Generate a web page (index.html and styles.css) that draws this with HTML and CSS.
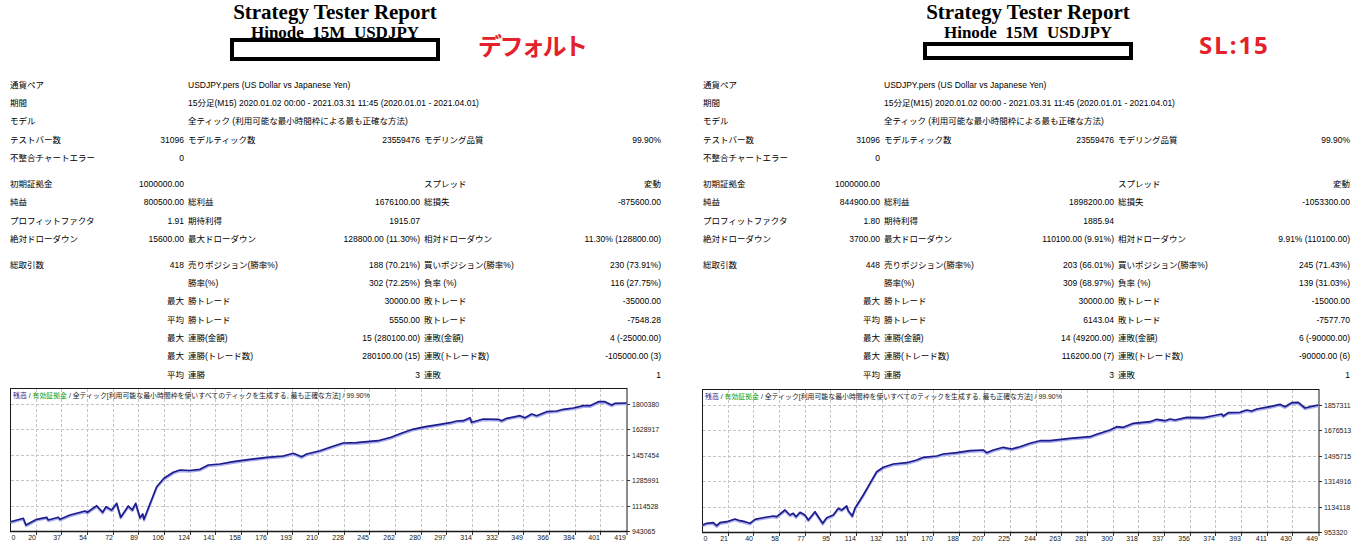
FILE: index.html
```html
<!DOCTYPE html>
<html lang="ja">
<head>
<meta charset="utf-8">
<title>Strategy Tester Report</title>
<link rel="stylesheet" href="styles.css">
</head>
<body>
<div class="page">

  <section class="panel">
    <div class="header">
      <div class="titlebox">
        <div class="title">Strategy Tester Report</div>
        <div class="subtitle">Hinode&nbsp; 15M&nbsp; USDJPY</div>
        <div class="redact"></div>
      </div>
      <div class="tag">デフォルト</div>
    </div>

    <div class="table">
      <div class="group">
        <span class="k0">通貨ペア</span><span></span><span class="k span">USDJPY.pers (US Dollar vs Japanese Yen)</span>
        <span class="k0">期間</span><span></span><span class="k span">15分足(M15) 2020.01.02 00:00 - 2021.03.31 11:45 (2020.01.01 - 2021.04.01)</span>
        <span class="k0">モデル</span><span></span><span class="k span">全ティック (利用可能な最小時間枠による最も正確な方法)</span>
        <span class="k0">テストバー数</span><span class="v">31096</span><span class="k">モデルティック数</span><span class="v">23559476</span><span class="k">モデリング品質</span><span class="v">99.90%</span>
        <span class="k0">不整合チャートエラー</span><span class="v">0</span><span></span><span></span><span></span><span></span>
      </div>
      <div class="group">
        <span class="k0">初期証拠金</span><span class="v">1000000.00</span><span></span><span></span><span class="k">スプレッド</span><span class="v">変動</span>
        <span class="k0">純益</span><span class="v">800500.00</span><span class="k">総利益</span><span class="v">1676100.00</span><span class="k">総損失</span><span class="v">-875600.00</span>
        <span class="k0">プロフィットファクタ</span><span class="v">1.91</span><span class="k">期待利得</span><span class="v">1915.07</span><span></span><span></span>
        <span class="k0">絶対ドローダウン</span><span class="v">15600.00</span><span class="k">最大ドローダウン</span><span class="v">128800.00 (11.30%)</span><span class="k">相対ドローダウン</span><span class="v">11.30% (128800.00)</span>
      </div>
      <div class="group">
        <span class="k0">総取引数</span><span class="v">418</span><span class="k">売りポジション(勝率%)</span><span class="v">188 (70.21%)</span><span class="k">買いポジション(勝率%)</span><span class="v">230 (73.91%)</span>
        <span class="k0"></span><span class="v"></span><span class="k">勝率(%)</span><span class="v">302 (72.25%)</span><span class="k">負率 (%)</span><span class="v">116 (27.75%)</span>
        <span class="k0"></span><span class="v">最大</span><span class="k">勝トレード</span><span class="v">30000.00</span><span class="k">敗トレード</span><span class="v">-35000.00</span>
        <span class="k0"></span><span class="v">平均</span><span class="k">勝トレード</span><span class="v">5550.00</span><span class="k">敗トレード</span><span class="v">-7548.28</span>
        <span class="k0"></span><span class="v">最大</span><span class="k">連勝(金額)</span><span class="v">15 (280100.00)</span><span class="k">連敗(金額)</span><span class="v">4 (-25000.00)</span>
        <span class="k0"></span><span class="v">最大</span><span class="k">連勝(トレード数)</span><span class="v">280100.00 (15)</span><span class="k">連敗(トレード数)</span><span class="v">-105000.00 (3)</span>
        <span class="k0"></span><span class="v">平均</span><span class="k">連勝</span><span class="v">3</span><span class="k">連敗</span><span class="v">1</span>
      </div>
    </div>

    <svg class="chart" viewBox="0 0 680 160" width="680" height="160">
      <defs>
        <g id="grid">
          <g class="gl">
            <line x1="26.5" y1="3" x2="26.5" y2="145"/><line x1="51.5" y1="3" x2="51.5" y2="145"/><line x1="77.5" y1="3" x2="77.5" y2="145"/><line x1="103.5" y1="3" x2="103.5" y2="145"/><line x1="128.5" y1="3" x2="128.5" y2="145"/><line x1="154.5" y1="3" x2="154.5" y2="145"/><line x1="180.5" y1="3" x2="180.5" y2="145"/><line x1="205.5" y1="3" x2="205.5" y2="145"/><line x1="231.5" y1="3" x2="231.5" y2="145"/><line x1="257.5" y1="3" x2="257.5" y2="145"/><line x1="282.5" y1="3" x2="282.5" y2="145"/><line x1="308.5" y1="3" x2="308.5" y2="145"/><line x1="334.5" y1="3" x2="334.5" y2="145"/><line x1="359.5" y1="3" x2="359.5" y2="145"/><line x1="385.5" y1="3" x2="385.5" y2="145"/><line x1="411.5" y1="3" x2="411.5" y2="145"/><line x1="436.5" y1="3" x2="436.5" y2="145"/><line x1="462.5" y1="3" x2="462.5" y2="145"/><line x1="488.5" y1="3" x2="488.5" y2="145"/><line x1="513.5" y1="3" x2="513.5" y2="145"/><line x1="539.5" y1="3" x2="539.5" y2="145"/><line x1="565.5" y1="3" x2="565.5" y2="145"/><line x1="590.5" y1="3" x2="590.5" y2="145"/>
            <line x1="1" y1="18.5" x2="616.5" y2="18.5"/><line x1="1" y1="43.5" x2="616.5" y2="43.5"/><line x1="1" y1="69.5" x2="616.5" y2="69.5"/><line x1="1" y1="94.5" x2="616.5" y2="94.5"/><line x1="1" y1="120.5" x2="616.5" y2="120.5"/>
          </g>
          <rect class="frame" x="0.5" y="2.5" width="616.5" height="143"/>
          <line class="axis" x1="0" y1="145.5" x2="617.5" y2="145.5"/>
          <path class="ticks" d="M617 18.5h3M617 43.5h3M617 69.5h3M617 94.5h3M617 120.5h3M617 145.5h3M26.5 146v3M51.5 146v3M77.5 146v3M103.5 146v3M128.5 146v3M154.5 146v3M180.5 146v3M205.5 146v3M231.5 146v3M257.5 146v3M282.5 146v3M308.5 146v3M334.5 146v3M359.5 146v3M385.5 146v3M411.5 146v3M436.5 146v3M462.5 146v3M488.5 146v3M513.5 146v3M539.5 146v3M565.5 146v3M590.5 146v3M617 146v3"/>
        </g>
      </defs>
      <use href="#grid"/>
      <text class="legend" x="3" y="11.5"><tspan class="lg-bal">残高</tspan> / <tspan class="lg-eq">有効証拠金</tspan> / 全ティック[利用可能な最小時間枠を使いすべてのティックを生成する, 最も正確な方法] / 99.90%</text>
      <polyline class="eq-shadow" points="0.7,135.7 13.3,132.3 16,139 26.7,133.3 36.7,131.3 38.3,134 48.3,131.3 50,133.3 60,129 75,125 77.3,126.3 86.7,119.7 92.7,126.3 96,120.7 101.7,124 106.7,117.3 110.7,131.3 118.3,120 122.3,124 125.7,117.3 130,131.7 132.7,128 134,133.3 138.3,122.3 146.7,100.7 154,92.3 163.3,86.3 170,84 180,84.5 190,83.3 198.3,79 210,78 223.3,75.7 240,73.3 256.7,71.3 273.3,70 283.3,67.3 291.7,70.7 296.7,68 310,64.7 320,61.3 333,57 346.3,56.7 368,54.7 381,51.3 392,47 402.6,43.3 415.6,40.7 430,38.3 440,36.7 446.7,35 453.3,34.7 460,31.7 461.7,36.3 473.3,33 488.3,33.3 491.7,34.7 496.7,32.3 510,29.7 515,31.7 521.7,28 526.7,29.7 536.7,25.7 546.7,25 553.3,23.3 563.3,22 573.3,19.7 580,19.7 588.3,15.7 595,15.7 601.7,19 605,17.3 616.7,17"/>
      <polyline class="eq" points="0.7,135.7 13.3,132.3 16,139 26.7,133.3 36.7,131.3 38.3,134 48.3,131.3 50,133.3 60,129 75,125 77.3,126.3 86.7,119.7 92.7,126.3 96,120.7 101.7,124 106.7,117.3 110.7,131.3 118.3,120 122.3,124 125.7,117.3 130,131.7 132.7,128 134,133.3 138.3,122.3 146.7,100.7 154,92.3 163.3,86.3 170,84 180,84.5 190,83.3 198.3,79 210,78 223.3,75.7 240,73.3 256.7,71.3 273.3,70 283.3,67.3 291.7,70.7 296.7,68 310,64.7 320,61.3 333,57 346.3,56.7 368,54.7 381,51.3 392,47 402.6,43.3 415.6,40.7 430,38.3 440,36.7 446.7,35 453.3,34.7 460,31.7 461.7,36.3 473.3,33 488.3,33.3 491.7,34.7 496.7,32.3 510,29.7 515,31.7 521.7,28 526.7,29.7 536.7,25.7 546.7,25 553.3,23.3 563.3,22 573.3,19.7 580,19.7 588.3,15.7 595,15.7 601.7,19 605,17.3 616.7,17"/>
      <g class="ylab">
        <text x="622" y="21">1800380</text><text x="622" y="46">1628917</text><text x="622" y="72">1457454</text><text x="622" y="97">1285991</text><text x="622" y="123">1114528</text><text x="622" y="148">943065</text>
      </g>
      <g class="xlab">
        <text class="x0" x="1.5" y="154.2">0</text>
        <text x="26" y="154.2">20</text><text x="51" y="154.2">37</text><text x="77" y="154.2">54</text><text x="103" y="154.2">72</text><text x="128" y="154.2">89</text><text x="154" y="154.2">106</text><text x="180" y="154.2">124</text><text x="205" y="154.2">141</text><text x="231" y="154.2">158</text><text x="257" y="154.2">176</text><text x="282" y="154.2">193</text><text x="308" y="154.2">210</text><text x="334" y="154.2">228</text><text x="359" y="154.2">245</text><text x="385" y="154.2">262</text><text x="411" y="154.2">280</text><text x="436" y="154.2">297</text><text x="462" y="154.2">314</text><text x="488" y="154.2">332</text><text x="513" y="154.2">349</text><text x="539" y="154.2">366</text><text x="565" y="154.2">384</text><text x="590" y="154.2">401</text><text x="616" y="154.2">419</text>
      </g>
    </svg>
  </section>

  <section class="panel panel--sl">
    <div class="header">
      <div class="titlebox">
        <div class="title">Strategy Tester Report</div>
        <div class="subtitle">Hinode&nbsp; 15M&nbsp; USDJPY</div>
        <div class="redact"></div>
      </div>
      <div class="tag">SL:15</div>
    </div>

    <div class="table">
      <div class="group">
        <span class="k0">通貨ペア</span><span></span><span class="k span">USDJPY.pers (US Dollar vs Japanese Yen)</span>
        <span class="k0">期間</span><span></span><span class="k span">15分足(M15) 2020.01.02 00:00 - 2021.03.31 11:45 (2020.01.01 - 2021.04.01)</span>
        <span class="k0">モデル</span><span></span><span class="k span">全ティック (利用可能な最小時間枠による最も正確な方法)</span>
        <span class="k0">テストバー数</span><span class="v">31096</span><span class="k">モデルティック数</span><span class="v">23559476</span><span class="k">モデリング品質</span><span class="v">99.90%</span>
        <span class="k0">不整合チャートエラー</span><span class="v">0</span><span></span><span></span><span></span><span></span>
      </div>
      <div class="group">
        <span class="k0">初期証拠金</span><span class="v">1000000.00</span><span></span><span></span><span class="k">スプレッド</span><span class="v">変動</span>
        <span class="k0">純益</span><span class="v">844900.00</span><span class="k">総利益</span><span class="v">1898200.00</span><span class="k">総損失</span><span class="v">-1053300.00</span>
        <span class="k0">プロフィットファクタ</span><span class="v">1.80</span><span class="k">期待利得</span><span class="v">1885.94</span><span></span><span></span>
        <span class="k0">絶対ドローダウン</span><span class="v">3700.00</span><span class="k">最大ドローダウン</span><span class="v">110100.00 (9.91%)</span><span class="k">相対ドローダウン</span><span class="v">9.91% (110100.00)</span>
      </div>
      <div class="group">
        <span class="k0">総取引数</span><span class="v">448</span><span class="k">売りポジション(勝率%)</span><span class="v">203 (66.01%)</span><span class="k">買いポジション(勝率%)</span><span class="v">245 (71.43%)</span>
        <span class="k0"></span><span class="v"></span><span class="k">勝率(%)</span><span class="v">309 (68.97%)</span><span class="k">負率 (%)</span><span class="v">139 (31.03%)</span>
        <span class="k0"></span><span class="v">最大</span><span class="k">勝トレード</span><span class="v">30000.00</span><span class="k">敗トレード</span><span class="v">-15000.00</span>
        <span class="k0"></span><span class="v">平均</span><span class="k">勝トレード</span><span class="v">6143.04</span><span class="k">敗トレード</span><span class="v">-7577.70</span>
        <span class="k0"></span><span class="v">最大</span><span class="k">連勝(金額)</span><span class="v">14 (49200.00)</span><span class="k">連敗(金額)</span><span class="v">6 (-90000.00)</span>
        <span class="k0"></span><span class="v">最大</span><span class="k">連勝(トレード数)</span><span class="v">116200.00 (7)</span><span class="k">連敗(トレード数)</span><span class="v">-90000.00 (6)</span>
        <span class="k0"></span><span class="v">平均</span><span class="k">連勝</span><span class="v">3</span><span class="k">連敗</span><span class="v">1</span>
      </div>
    </div>

    <svg class="chart" viewBox="0 0 680 160" width="680" height="160">
      <use href="#grid"/>
      <text class="legend" x="3" y="11.5"><tspan class="lg-bal">残高</tspan> / <tspan class="lg-eq">有効証拠金</tspan> / 全ティック[利用可能な最小時間枠を使いすべてのティックを生成する, 最も正確な方法] / 99.90%</text>
      <polyline class="eq-shadow" points="0.7,138 4.7,136.3 11.3,135.7 14.7,138.7 18,135.7 24.7,134.7 33,132 38,133.7 43,134.7 48,136.3 53,132.3 62,130.5 71.3,129 74.7,129.7 83,123 88,128 91.3,126.3 94,129.7 98,125.3 103,128 106.3,133 113,124.7 120.7,136.3 124.7,130.7 131.3,128 136.3,121.3 139.7,123 144.7,119 146.3,123.7 150.3,129 153,121.3 161.3,108 168,96.3 174.7,84.7 181.3,80.3 191.3,77 204.7,75.7 214.7,73 221.3,70.3 234.7,69 241.3,67 254.7,65.7 268,63.7 281.3,63 284.7,65.7 291.3,63 301.3,60.3 309.7,62 318,59.7 328,56.3 338,53.7 348,53.7 368,51.3 388,49.7 394.7,47.3 408,43 414.7,39.7 421.3,40.3 431.3,36.3 448,34.7 454.7,32.3 463,33.7 468,32 473,33 484.7,30.3 501.3,30.7 509.7,29 519.7,27 521.3,29 526.3,25.7 538,25.3 544.7,23 549.7,24 554.7,22 568,19.7 578,17.3 583,19.7 589.7,15.7 596.3,15.3 603,21 608,19.7 616.3,18"/>
      <polyline class="eq" points="0.7,138 4.7,136.3 11.3,135.7 14.7,138.7 18,135.7 24.7,134.7 33,132 38,133.7 43,134.7 48,136.3 53,132.3 62,130.5 71.3,129 74.7,129.7 83,123 88,128 91.3,126.3 94,129.7 98,125.3 103,128 106.3,133 113,124.7 120.7,136.3 124.7,130.7 131.3,128 136.3,121.3 139.7,123 144.7,119 146.3,123.7 150.3,129 153,121.3 161.3,108 168,96.3 174.7,84.7 181.3,80.3 191.3,77 204.7,75.7 214.7,73 221.3,70.3 234.7,69 241.3,67 254.7,65.7 268,63.7 281.3,63 284.7,65.7 291.3,63 301.3,60.3 309.7,62 318,59.7 328,56.3 338,53.7 348,53.7 368,51.3 388,49.7 394.7,47.3 408,43 414.7,39.7 421.3,40.3 431.3,36.3 448,34.7 454.7,32.3 463,33.7 468,32 473,33 484.7,30.3 501.3,30.7 509.7,29 519.7,27 521.3,29 526.3,25.7 538,25.3 544.7,23 549.7,24 554.7,22 568,19.7 578,17.3 583,19.7 589.7,15.7 596.3,15.3 603,21 608,19.7 616.3,18"/>
      <g class="ylab">
        <text x="622" y="21">1857311</text><text x="622" y="46">1676513</text><text x="622" y="72">1495715</text><text x="622" y="97">1314916</text><text x="622" y="123">1134118</text><text x="622" y="148">953320</text>
      </g>
      <g class="xlab">
        <text class="x0" x="1.5" y="154.2">0</text>
        <text x="26" y="154.2">21</text><text x="51" y="154.2">40</text><text x="77" y="154.2">58</text><text x="103" y="154.2">77</text><text x="128" y="154.2">95</text><text x="154" y="154.2">114</text><text x="180" y="154.2">132</text><text x="205" y="154.2">151</text><text x="231" y="154.2">170</text><text x="257" y="154.2">188</text><text x="282" y="154.2">207</text><text x="308" y="154.2">225</text><text x="334" y="154.2">244</text><text x="359" y="154.2">263</text><text x="385" y="154.2">281</text><text x="411" y="154.2">300</text><text x="436" y="154.2">318</text><text x="462" y="154.2">337</text><text x="488" y="154.2">356</text><text x="513" y="154.2">374</text><text x="539" y="154.2">393</text><text x="565" y="154.2">411</text><text x="590" y="154.2">430</text><text x="616" y="154.2">449</text>
      </g>
    </svg>
  </section>

</div>
</body>
</html>
```

FILE: styles.css
```css
* { box-sizing: border-box; }

html, body {
  margin: 0;
  padding: 0;
  background: #ffffff;
}

body {
  width: 1369px;
  height: 560px;
  overflow: hidden;
  color: #000000;
  font-family: "Liberation Sans", "Noto Sans CJK JP", sans-serif;
}

.page {
  display: flex;
  align-items: flex-start;
}

.panel {
  width: 693px;
  padding-left: 10px;
  --cols: 120px 54px 136px 100px 138px 103px;
}

.panel--sl {
  width: 676px;
  --cols: 120px 57px 134px 100px 131px 105px;
}

/* ---------- header ---------- */
.header {
  height: 66px;
  display: flex;
  align-items: flex-start;
  padding-left: 220px;
}

.titlebox {
  width: 210px;
  padding-top: 1px;
  text-align: center;
  font-family: "Liberation Serif", "Times New Roman", serif;
  font-weight: bold;
  color: #000;
}

.title {
  font-size: 21px;
  line-height: 22px;
  white-space: nowrap;
}

.subtitle {
  font-size: 17px;
  line-height: 18px;
  margin-top: 1px;
  white-space: nowrap;
}

.redact {
  position: relative;
  height: 23px;
  margin-top: -4px;
  border: 4px solid #000;
  background: #fff;
}

.panel--sl .redact {
  height: 18px;
  margin-top: 0;
}

.tag {
  margin-left: 38px;
  margin-top: 33px;
  font-family: "Noto Sans CJK JP", sans-serif;
  font-size: 24px;
  line-height: 24px;
  font-weight: bold;
  letter-spacing: -2.5px;
  color: #e4202a;
  white-space: nowrap;
}

.panel--sl .tag {
  margin-left: 66px;
  font-family: "Noto Sans", "Noto Sans CJK JP", sans-serif;
  letter-spacing: 2px;
}

/* ---------- stats table ---------- */
.table {
  padding-top: 9.8px;
  font-size: 8.5px;
}

.group {
  display: grid;
  grid-template-columns: var(--cols);
  line-height: 18.33px;
}

.group + .group {
  margin-top: 7.5px;
}

.group > span {
  white-space: nowrap;
  min-height: 18.33px;
}

.k0 {
  text-align: left;
}

.k {
  padding-left: 4px;
  text-align: left;
}

.v {
  text-align: right;
}

.span {
  grid-column: 3 / -1;
}

/* ---------- chart ---------- */
.chart {
  display: block;
  margin-top: 1.9px;
  overflow: visible;
}

.panel--sl .chart {
  margin-top: 2.9px;
  margin-left: -1px;
}

.gl line {
  stroke: #c4c4c4;
  stroke-width: 1;
  stroke-dasharray: 3 2;
}

.frame {
  fill: none;
  stroke: #1a1a1a;
  stroke-width: 1;
}

.axis {
  stroke: #1a1a1a;
  stroke-width: 1.6;
}

.ticks {
  stroke: #333;
  stroke-width: 1;
  fill: none;
}

.legend {
  font-family: "Liberation Sans", "Noto Sans CJK JP", sans-serif;
  font-size: 6.9px;
  fill: #222;
}

.lg-bal { fill: #1a1a90; }
.lg-eq { fill: #12a012; }

.eq-shadow {
  fill: none;
  stroke: #a9acee;
  stroke-width: 2.2;
  stroke-linejoin: round;
  transform: translateY(1.2px);
}

.eq {
  fill: none;
  stroke: #1c1c8a;
  stroke-width: 1.7;
  stroke-linejoin: round;
}

.ylab text,
.xlab text {
  font-family: "Liberation Sans", sans-serif;
  font-size: 7px;
  fill: #222;
}

.xlab text {
  text-anchor: end;
}

.xlab .x0 {
  text-anchor: start;
}
```
